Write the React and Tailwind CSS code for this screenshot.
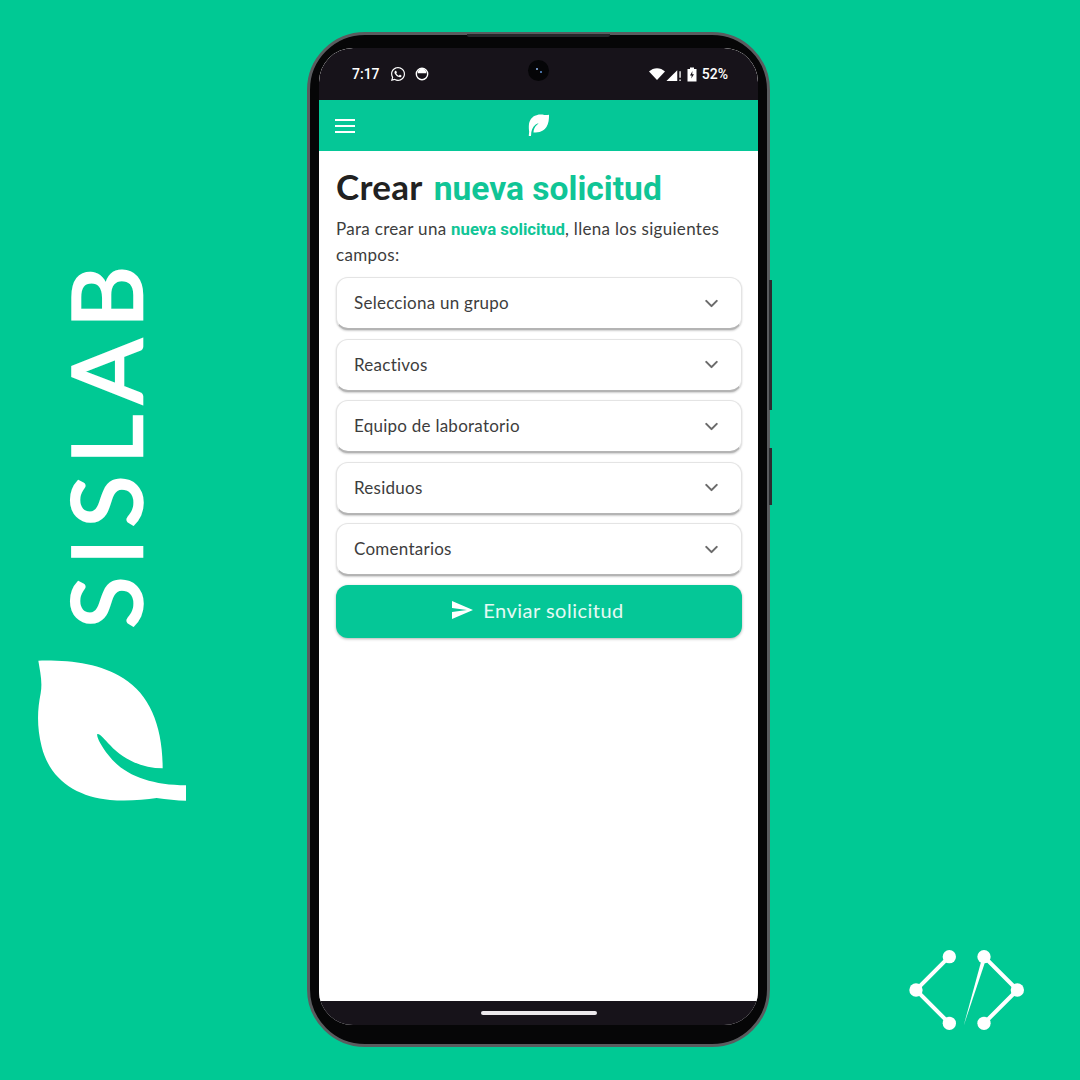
import React from "react";
import { ChevronDown } from "lucide-react";
import { FaWhatsapp } from "react-icons/fa";
import { MdSend } from "react-icons/md";

const LEAF =
  "M55 62 C150 60 240 70 310 115 C390 165 428 260 428 385 C370 385 310 360 270 315 C255 300 240 280 232 282 C228 290 245 320 265 345 C310 405 390 435 498 436 L498 482 C470 482 440 478 410 474 C370 480 320 484 270 480 C170 470 90 420 65 320 C50 260 52 210 62 160 C68 125 60 95 55 62 Z";

const fields = [
  "Selecciona un grupo",
  "Reactivos",
  "Equipo de laboratorio",
  "Residuos",
  "Comentarios",
];

const Leaf = ({ className }) => (
  <svg viewBox="0 0 540 540" className={className}>
    <path d={LEAF} fill="white" />
  </svg>
);

const CodeLogo = () => (
  <svg viewBox="0 0 435 330" className="w-[145px] h-[110px]">
    <g stroke="white" strokeWidth="12" fill="none">
      <path d="M163 65 L63 165 L163 265" />
      <path d="M267 65 L367 165 L267 265" />
    </g>
    <path d="M261 70 L272 76 L206 272 Z" fill="white" />
    <g fill="white">
      <circle cx="163" cy="65" r="20" />
      <circle cx="63" cy="165" r="20" />
      <circle cx="163" cy="265" r="20" />
      <circle cx="267" cy="65" r="20" />
      <circle cx="367" cy="165" r="20" />
      <circle cx="267" cy="265" r="20" />
    </g>
  </svg>
);

const StatusBar = () => (
  <div className="h-[52px] bg-[#17131a] rounded-t-[34px] flex items-center justify-between pl-[33px] pr-[30px] text-white font-['Roboto',sans-serif] text-[14px] relative">
    <div className="flex items-center gap-[9px]">
      <span className="mr-[1px] font-medium">7:17</span>
      <FaWhatsapp className="w-[16px] h-[16px]" />
      <svg viewBox="0 0 16 16" className="w-[14px] h-[14px]">
        <circle cx="8" cy="8" r="6.5" fill="none" stroke="white" strokeWidth="1.6" />
        <path d="M3 7 A5 5 0 0 1 13 7 Z" fill="white" />
      </svg>
    </div>
    {/* camera */}
    <div className="absolute left-[209px] top-[12px] w-[21px] h-[21px] rounded-full bg-[#050507] flex items-center justify-center gap-[2px]">
      <div className="w-[2px] h-[2px] rounded-full bg-[#8fb8f0] mb-[3px]" />
      <div className="w-[2px] h-[2px] rounded-full bg-[#5f95d8] mt-[3px]" />
    </div>
    <div className="flex items-center gap-[1px] font-medium">
      <svg viewBox="0 0 16 12" className="w-[16px] h-[12px]">
        <path d="M0 3.5 C4.5 -1 11.5 -1 16 3.5 L8 12 Z" fill="white" />
      </svg>
      <svg viewBox="0 0 14 12" className="w-[16px] h-[13px]">
        <path d="M0 12 L10 2 L10 12 Z" fill="white" />
        <path d="M12 3 H13.2 V9 H12 Z M12 10.5 H13.2 V12 H12 Z" fill="white" />
      </svg>
      <svg viewBox="0 0 10 14" className="w-[10px] h-[15px] ml-[4px]">
        <path d="M3 0 H7 V1.5 H9.5 V14 H0.5 V1.5 H3 Z" fill="white" />
        <path d="M5.5 3.5 L3 8 H4.7 L4.3 11 L7 6.8 H5.2 Z" fill="#17131a" />
      </svg>
      <span className="ml-[4px]">52%</span>
    </div>
  </div>
);

const FieldRow = ({ label }) => (
  <div className="h-[53px] bg-white rounded-[12px] border border-[#e4e4e4] border-b-2 border-b-[#b4b4b4] shadow-[0_1px_2px_rgba(0,0,0,0.2)] flex items-center justify-between pl-[17px] pr-[19px] text-[#3d3d3d] text-[17px] tracking-[0.25px]">
    <span>{label}</span>
    <ChevronDown className="w-[21px] h-[21px] text-[#6b6b6b]" strokeWidth={2.4} />
  </div>
);

const Phone = () => (
  <div className="relative w-[463px] h-[1015px] mt-[32px] rounded-[58px] bg-[#060607] border-[3px] border-[#5a5c5f] p-[9px] pt-[13px] pb-[19px]">
    {/* top sensor slit and side buttons */}
    <div className="absolute left-[157px] top-[-1px] w-[143px] h-[3px] rounded-b-[2px] bg-[#26272a]" />
    <div className="absolute right-[-5px] top-[245px] w-[3px] h-[130px] bg-[#2b2d30]" />
    <div className="absolute right-[-5px] top-[413px] w-[3px] h-[57px] bg-[#2b2d30]" />
    <div className="h-full rounded-[34px] overflow-hidden flex flex-col bg-white">
      <StatusBar />
      <div className="h-[51px] bg-[#05c797] flex items-center relative shrink-0">
        <div className="ml-[16px] w-[20px] flex flex-col gap-[4px]">
          <div className="h-[2px] bg-white" />
          <div className="h-[2px] bg-white" />
          <div className="h-[2px] bg-white" />
        </div>
        <Leaf className="absolute left-[207px] top-[12px] w-[26px] h-[26px] rotate-90" />
      </div>
      <div className="flex-1 bg-white pl-[17px] pr-[16px] pt-[13px] font-['Lato',sans-serif]">
        <h1 className="text-[35px] leading-[44px] font-bold tracking-[0.3px] text-[#212121]">
          Crear{" "}
          <span className="ml-[3px] text-[33.6px] tracking-normal font-['Roboto',sans-serif] text-[#10c596]">
            nueva solicitud
          </span>
        </h1>
        <p className="mt-[5px] text-[17px] tracking-[0.3px] leading-[26px] text-[#3d3d3d]">
          Para crear una{" "}
          <span className="text-[16.8px] tracking-normal font-['Roboto',sans-serif] font-bold text-[#10c596]">
            nueva solicitud
          </span>
          , llena los siguientes campos:
        </p>
        <div className="mt-[9px] flex flex-col gap-[8.5px]">
          {fields.map((f) => (
            <FieldRow key={f} label={f} />
          ))}
          <button className="h-[53px] rounded-[12px] bg-[#05c797] text-white/90 text-[20px] tracking-[0.5px] pr-[4px] pb-[2px] flex items-center justify-center gap-[9px] shadow-[0_1px_3px_rgba(0,0,0,0.3)]">
            <MdSend className="w-[24px] h-[24px] text-white" />
            Enviar solicitud
          </button>
        </div>
      </div>
      <div className="h-[24px] bg-[#17131a] flex items-center justify-center shrink-0">
        <div className="w-[116px] h-[4px] rounded-full bg-[#ece9ec]" />
      </div>
    </div>
  </div>
);

export default function App() {
  return (
    <div className="w-[1080px] h-[1080px] bg-[#00c994] flex overflow-hidden">
      <div className="w-[307px] shrink-0 pt-[262px] pl-[20px] flex flex-col">
        <div className="h-[378px] pl-[39px] pb-[19px] flex items-center justify-start">
          <span className="[writing-mode:vertical-rl] rotate-180 font-['Lato',sans-serif] text-[96px] leading-[92px] tracking-[11px] text-white [-webkit-text-stroke:2.5px_white]">
            SISLAB
          </span>
        </div>
        <Leaf className="w-[180px] h-[180px]" />
      </div>
      <Phone />
      <div className="flex-1 flex items-end justify-start pl-[125px] pb-[35px]">
        <CodeLogo />
      </div>
    </div>
  );
}
